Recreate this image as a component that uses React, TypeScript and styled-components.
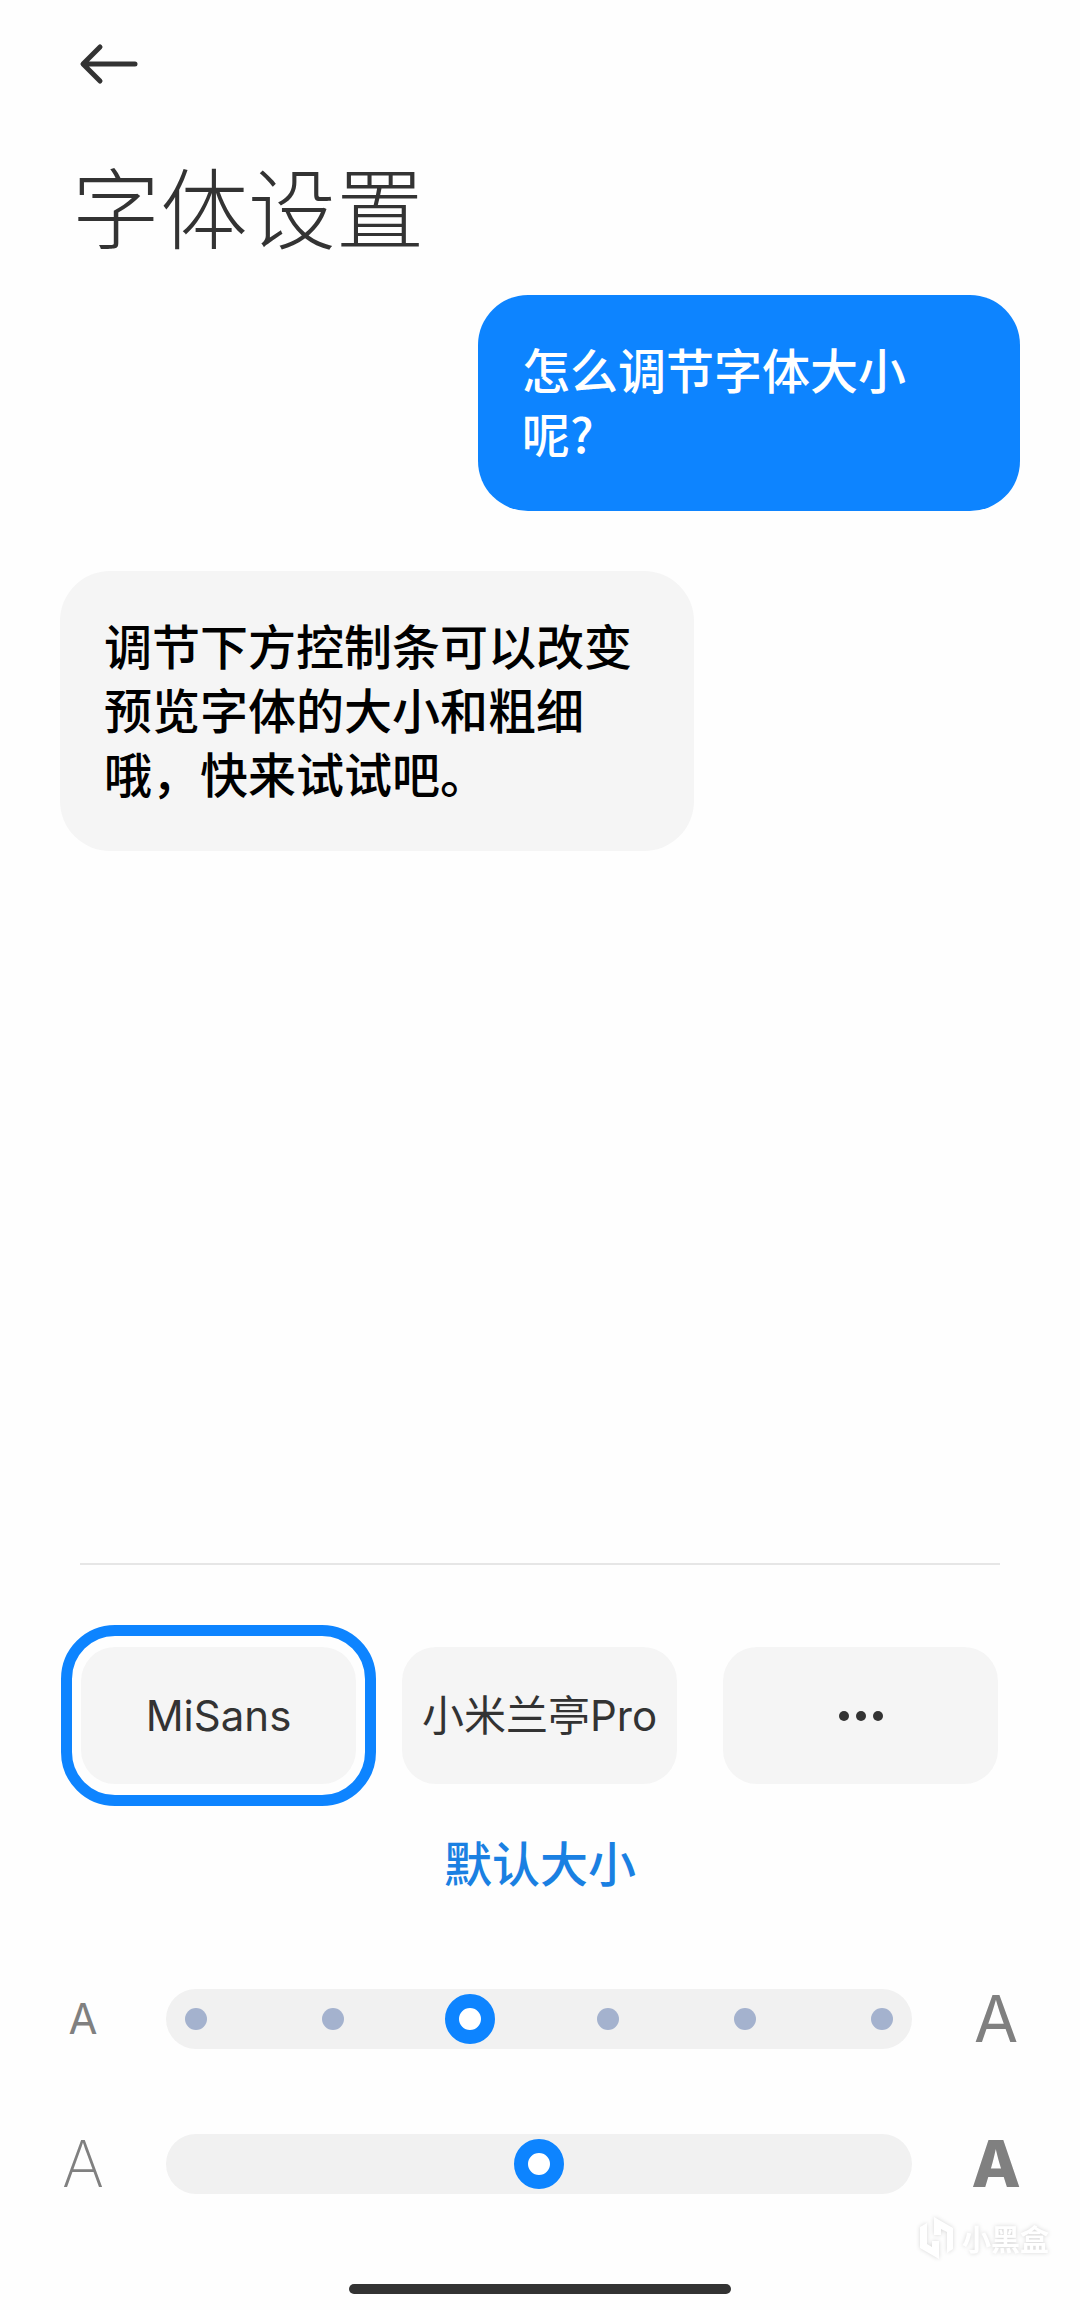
import React, { useState } from "react";
import styled, { createGlobalStyle } from "styled-components";

const latin = `Inter, "Noto Sans CJK SC", sans-serif`;
const blue = "#0d84ff";
const ink = "#333333";

const GlobalStyle = createGlobalStyle`
  * { box-sizing: border-box; }
  body {
    margin: 0;
    background: #fefefe;
    color: ${ink};
    font-family: "Noto Sans CJK SC", sans-serif;
  }
  button { font: inherit; color: inherit; border: 0; padding: 0; background: none; cursor: pointer; }
`;

const Screen = styled.main`
  position: relative;
  display: flex;
  flex-direction: column;
  min-height: 100vh;
  padding: 34px 60px 16px;
`;

const TopBar = styled.header`
  display: flex;
  flex-direction: column;
  align-items: flex-start;
  gap: 62px;
  padding: 0 12px;
`;

const BackButton = styled.button`
  display: grid;
  place-items: center;
  width: 74px;
  height: 60px;
`;

const Title = styled.h1`
  margin: 0;
  font-size: 88px;
  font-weight: 300;
  line-height: 96px;
`;

const Preview = styled.section`
  display: flex;
  flex: 1;
  flex-direction: column;
  gap: 60px;
  padding: 43px 0 60px;
`;

const Bubble = styled.p<{ $mine?: boolean }>`
  align-self: ${(p) => (p.$mine ? "flex-end" : "flex-start")};
  width: ${(p) => (p.$mine ? "542px" : "634px")};
  max-width: 100%;
  margin: 0;
  padding: 41px 44px 47px;
  border-radius: 50px;
  background: ${(p) => (p.$mine ? blue : "#f5f5f5")};
  color: ${(p) => (p.$mine ? "#ffffff" : "#000000")};
  font-size: 48px;
  font-weight: 500;
  line-height: 64px;
`;

const Panel = styled.section`
  display: flex;
  flex-direction: column;
`;

const Divider = styled.hr`
  width: calc(100% - 40px);
  height: 2px;
  margin: 0 20px 82px;
  border: 0;
  background: #e6e6e6;
`;

const FontList = styled.div`
  display: grid;
  grid-template-columns: repeat(3, 1fr);
  gap: 46px;
  padding: 0 22px 0 21px;
`;

const FontButton = styled.button<{ $selected?: boolean }>`
  position: relative;
  display: flex;
  align-items: center;
  justify-content: center;
  gap: 7px;
  height: 137px;
  border-radius: 34px;
  background: #f5f5f5;
  font-family: ${latin};
  font-size: 42px;
  line-height: 64px;
  white-space: nowrap;

  &::before {
    content: "";
    display: ${(p) => (p.$selected ? "block" : "none")};
    position: absolute;
    inset: -22px -20px;
    border: 11px solid ${blue};
    border-radius: 54px;
  }
`;

const MoreDot = styled.span`
  width: 10px;
  height: 10px;
  border-radius: 50%;
  background: ${ink};
`;

const SizeName = styled.output`
  margin: 45px 0 96px;
  color: #1a80e2;
  font-size: 48px;
  font-weight: 500;
  line-height: 64px;
  text-align: center;
`;

const SliderList = styled.div`
  display: flex;
  flex-direction: column;
  gap: 85px;
`;

const SliderRow = styled.div`
  display: grid;
  grid-template-columns: 46px 1fr 48px;
  align-items: center;
  gap: 60px;
`;

const Letter = styled.span<{ $size: number; $weight: number }>`
  justify-self: center;
  color: #808080;
  font-family: ${latin};
  font-size: ${(p) => p.$size}px;
  font-weight: ${(p) => p.$weight};
  line-height: 60px;
`;

const Track = styled.div`
  display: grid;
  height: 60px;
  border-radius: 30px;
  background: #f1f1f1;

  > * { grid-area: 1 / 1; }
`;

const Steps = styled.div`
  display: flex;
  align-items: center;
  justify-content: space-between;
  padding: 0 19px;
`;

const Step = styled.span`
  width: 22px;
  height: 22px;
  border-radius: 50%;
  background: #a4b2ce;
`;

const Range = styled.input`
  appearance: none;
  width: 100%;
  height: 60px;
  margin: 0;
  padding: 0 5px;
  background: transparent;

  &::-webkit-slider-thumb {
    appearance: none;
    box-sizing: border-box;
    width: 50px;
    height: 50px;
    border: 14px solid ${blue};
    border-radius: 50%;
    background: #ffffff;
  }
`;

const HomeBar = styled.div`
  align-self: center;
  width: 382px;
  height: 10px;
  margin-top: 90px;
  border-radius: 5px;
  background: ${ink};
`;

const Watermark = styled.div`
  position: absolute;
  right: 31px;
  bottom: 50px;
  display: flex;
  align-items: center;
  gap: 7px;
  color: #ffffff;
  font-size: 29px;
  font-weight: 700;
  line-height: 44px;
  filter: drop-shadow(0 0 2px rgba(0, 0, 0, 0.16));
`;

const sizeNames = ["极小", "小", "默认大小", "大", "特大", "极大"];

export default function App() {
  const [font, setFont] = useState("MiSans");
  const [size, setSize] = useState(2);
  const [weight, setWeight] = useState(50);

  return (
    <>
      <GlobalStyle />
      <Screen>
        <TopBar>
          <BackButton aria-label="返回">
            <svg width="60" height="42" viewBox="0 0 60 42" fill="none" stroke={ink} strokeWidth="5" strokeLinecap="round" strokeLinejoin="round">
              <path d="M21 4 4 21l17 17M5 21h51" />
            </svg>
          </BackButton>
          <Title>字体设置</Title>
        </TopBar>

        <Preview>
          <Bubble $mine>
            怎么调节字体大小
            <br />
            呢?
          </Bubble>
          <Bubble>调节下方控制条可以改变预览字体的大小和粗细哦，快来试试吧。</Bubble>
        </Preview>

        <Panel>
          <Divider />
          <FontList>
            {["MiSans", "小米兰亭Pro"].map((name) => (
              <FontButton key={name} $selected={font === name} aria-pressed={font === name} onClick={() => setFont(name)}>
                {name}
              </FontButton>
            ))}
            <FontButton aria-label="更多字体">
              <MoreDot />
              <MoreDot />
              <MoreDot />
            </FontButton>
          </FontList>
          <SizeName>{sizeNames[size]}</SizeName>
          <SliderList>
            <SliderRow>
              <Letter $size={42} $weight={400}>A</Letter>
              <Track>
                <Steps>
                  {sizeNames.map((name) => (
                    <Step key={name} />
                  ))}
                </Steps>
                <Range type="range" aria-label="字体大小" min={0} max={5} value={size} onChange={(e) => setSize(Number(e.target.value))} />
              </Track>
              <Letter $size={64} $weight={400}>A</Letter>
            </SliderRow>
            <SliderRow>
              <Letter $size={64} $weight={200}>A</Letter>
              <Track>
                <Range type="range" aria-label="字体粗细" min={0} max={100} value={weight} onChange={(e) => setWeight(Number(e.target.value))} />
              </Track>
              <Letter $size={64} $weight={800}>A</Letter>
            </SliderRow>
          </SliderList>
        </Panel>

        <HomeBar />
        <Watermark>
          <svg width="36" height="44" viewBox="0 0 36 44" fill="#ffffff">
            <path d="M1 11 8 7v21l5 3v-6h7v18L1 32zM15 1l19 11v21l-6 4V16l-6-3v6h-7z" />
          </svg>
          小黑盒
        </Watermark>
      </Screen>
    </>
  );
}
